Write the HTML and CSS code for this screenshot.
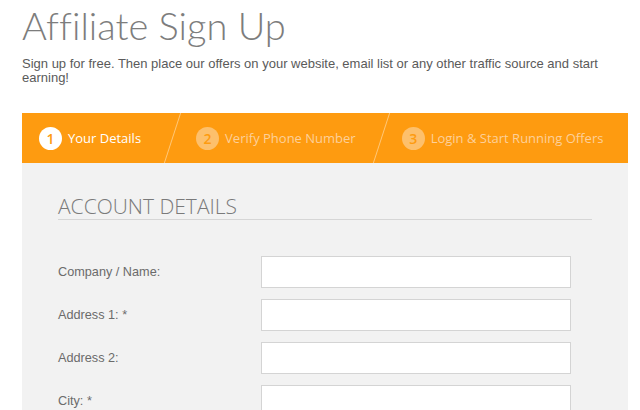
FILE: index.html
```html
<!DOCTYPE html>
<html>
<head>
<meta charset="utf-8">
<link rel="stylesheet" href="styles.css">
</head>
<body>
<div class="page">
  <h1 class="title">Affiliate Sign Up</h1>
  <p class="intro">Sign up for free. Then place our offers on your website, email list or any other traffic source and start earning!</p>
  <div class="steps">
    <div class="step active"><span class="num">1</span><span class="label">Your Details</span></div>
    <div class="sep"></div>
    <div class="step"><span class="num">2</span><span class="label">Verify Phone Number</span></div>
    <div class="sep sep-b"></div>
    <div class="step"><span class="num">3</span><span class="label">Login &amp; Start Running Offers</span></div>
  </div>
  <div class="panel">
    <h2 class="section">ACCOUNT DETAILS</h2>
    <div class="row"><label>Company / Name:</label><input type="text"></div>
    <div class="row"><label>Address 1: *</label><input type="text"></div>
    <div class="row"><label>Address 2:</label><input type="text"></div>
    <div class="row"><label>City: *</label><input type="text"></div>
  </div>
</div>
</body>
</html>
```
FILE: styles.css
```css
html, body { margin: 0; padding: 0; background: #fff; }
.page { padding: 0 10px 0 22px; }
.title {
  margin: 0;
  padding-top: 2px;
  font-family: "Lato", sans-serif;
  font-weight: 300;
  font-size: 38px;
  line-height: 46px;
  color: #7d7d7d;
  font-variant-ligatures: none;
}
.intro {
  margin: 9px 0 0;
  font-family: "Liberation Sans", Arial, sans-serif;
  font-size: 13px;
  line-height: 14px;
  color: #5a5a5a;
  width: 590px;
}
.steps {
  margin-top: 28px;
  height: 50px;
  width: 606px;
  background: #fe9b10;
  display: flex;
  align-items: center;
  padding-left: 17px;
  box-sizing: border-box;
  font-family: "Open Sans", sans-serif;
  font-size: 13px;
}
.step { display: flex; align-items: center; gap: 6px; color: #fdd09a; }
.step .num {
  width: 23px; height: 23px; border-radius: 50%;
  background: #fdc06c; color: #fe9b10;
  display: flex; align-items: center; justify-content: center;
  font-size: 14px; font-weight: 600;
}
.step.active { color: #fff; }
.step.active .num { background: #fff; color: #fe9b10; }
.sep {
  width: 1px; height: 50px;
  background: rgba(255,230,190,0.6);
  transform: skewX(-18deg);
  margin: 0 23px 0 31px;
}
.sep-b { margin: 0 20px 0 25px; }
.panel {
  width: 606px;
  box-sizing: border-box;
  background: #f2f2f2;
  padding: 30px 36px 20px;
  height: 260px;
}
.section {
  margin: 0;
  font-family: "Open Sans", sans-serif;
  font-weight: 300;
  font-size: 21px;
  line-height: 26px;
  color: #7a7a7a;
  border-bottom: 1px solid #d6d6d6;
  padding-bottom: 0;
  margin-bottom: 36px;
}
.row { display: flex; align-items: center; height: 32px; margin-bottom: 11px; }
.row label {
  width: 203px;
  font-family: "Liberation Sans", Arial, sans-serif;
  font-size: 12.7px;
  color: #6b6b6b;
}
.row input {
  width: 310px; height: 32px; box-sizing: border-box;
  border: 1px solid #d4d4d4; background: #fff; margin: 0;
}
```
